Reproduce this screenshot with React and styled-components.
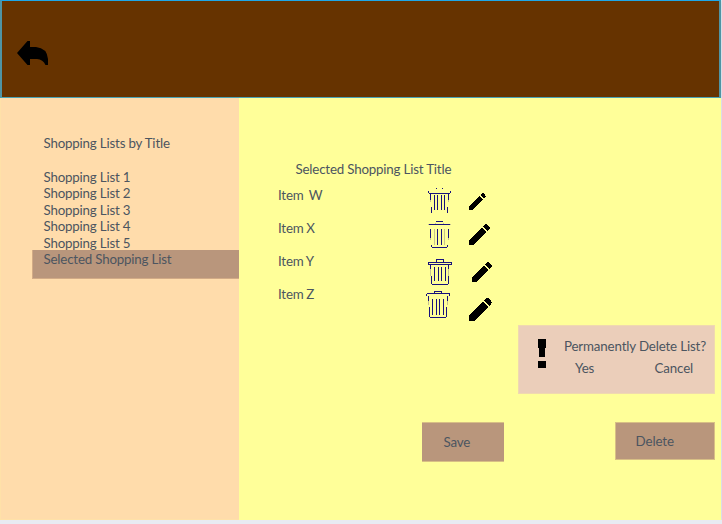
import React from "react";
import styled, { createGlobalStyle } from "styled-components";

const Global = createGlobalStyle`
  * { box-sizing: border-box; }
  body {
    margin: 0;
    background: #e8ebf2;
    font-family: Lato, "Liberation Sans", sans-serif;
    font-size: 13.33px;
    letter-spacing: -0.19px;
    line-height: 16.4px;
    color: #4c5560;
    overflow: hidden;
  }
`;

const Page = styled.div`
  width: 721px;
  height: 520px;
  display: grid;
  grid-template-rows: 98px 1fr;
  box-shadow: 0 1px 3px #c3c9d6;
`;

const Header = styled.header`
  background: #663300;
  border: 1px solid #1ea7e8;
  border-left: 2px solid #4f94a4;
  border-right: 2px solid #4f94a4;
  border-bottom-color: #4aa3b5;
  padding: 40px 0 0 15px;
  svg { display: block; }
`;

const Body = styled.div`
  display: grid;
  grid-template-columns: 239px 1fr;
`;

const Sidebar = styled.aside`
  background: #ffdcab;
  border-left: 1px solid #ffe1a8;
  border-bottom: 1px solid #ffe1a8;
  padding: 37px 0 0 31px;
`;

const SideTitle = styled.h2`
  margin: 0 0 17.3px 11.5px;
  font-size: inherit;
  font-weight: 400;
`;

const Lists = styled.ul`
  list-style: none;
  margin: 0;
  padding: 0;
`;

const ListEntry = styled.li`
  height: ${(p) => (p.$selected ? "29px" : "16.5px")};
  margin-top: ${(p) => (p.$selected ? "-1px" : "0")};
  padding-top: ${(p) => (p.$selected ? "0.6px" : "0")};
  padding-left: ${(p) => (p.$selected ? "10.5px" : "11.5px")};
  background: ${(p) => (p.$selected ? "#b9967c" : "transparent")};
  border: solid #d2ab86;
  border-width: ${(p) => (p.$selected ? "0 0 1px 1px" : "0")};
`;

const Main = styled.main`
  background: #ffff99;
  display: flex;
  flex-direction: column;
`;

const MainTitle = styled.h1`
  margin: 63px 0 0 56.5px;
  font-size: inherit;
  font-weight: 400;
  height: 26px;
`;

const Item = styled.div`
  display: flex;
  align-items: flex-start;
  height: 33px;
  padding-left: 39px;
`;

const ItemName = styled.span`
  width: 149px;
  white-space: pre;
  word-spacing: -0.5px;
`;

const Icon = styled.svg`
  flex: none;
  display: block;
  margin-top: ${(p) => p.$top || 0}px;
  margin-left: ${(p) => p.$left || 0}px;
`;

const Confirm = styled.section`
  align-self: flex-end;
  width: 197px;
  height: 69px;
  margin: 6px 6px 0 0;
  background: #ebceba;
  border: 1px solid #f0d9b0;
  display: flex;
  padding: 13px 0 0 19px;
`;

const Question = styled.div`
  margin: -1px 0 0 18px;
  letter-spacing: -0.16px;
  white-space: nowrap;
`;

const Answers = styled.div`
  display: flex;
  justify-content: space-between;
  width: 118px;
  margin: 6px 0 0 11px;
`;

const Choice = styled.button`
  font: inherit;
  letter-spacing: inherit;
  color: inherit;
  padding: 0;
  border: 0;
  background: none;
`;

const Actions = styled.div`
  display: flex;
  justify-content: space-between;
  align-items: flex-start;
  margin: 28px 6px 0 183px;
`;

const Action = styled.button`
  font: inherit;
  letter-spacing: ${(p) => (p.$sides ? "-0.1px" : "-0.17px")};
  color: inherit;
  text-align: left;
  width: ${(p) => p.$w}px;
  height: ${(p) => p.$h}px;
  padding: 0 0 0 ${(p) => p.$pad}px;
  background: #b9967c;
  border: solid #d8bf85;
  border-width: ${(p) => (p.$sides ? "1px" : "1px 0")};
`;

// Each bin is drawn on whole pixels, one stroke per outline segment.
const bins = [
  {
    top: 0,
    left: 0,
    dark: "M8 1.5h1M14 1.5h1M1 6.5h21M.5 4v2M22.5 4v2M2.5 7v6M20.5 7v6M6.5 8v15M9.5 8v15M13.5 8v15M16.5 8v15M3.5 20v6M19.5 20v6",
    faint: "M2.5 13v2M20.5 13v2",
  },
  {
    top: 0,
    left: 0,
    dark: "M8 1.5h7M1 4.5h21M2.5 9v9M20.5 9v9M9.5 9v16M13.5 9v16M4 27.5h15M3.5 25v2M19.5 25v2",
    faint: "M7 3.5h1M15 3.5h1M0 4.5h1M22 4.5h1M6.5 9v16M16.5 9v16M2.5 18v2M20.5 18v2",
  },
  {
    top: 5,
    left: 0,
    dark: "M8.5 4v-2.5h7v2.5M.5 4.5h23v2h-23zM2.5 7v4M20.5 7v4M3.5 18v8M20.5 18v8M4 26.5h16M6.5 9v14M10.5 9v14M13.5 9v14M17.5 9v14",
    faint: "M2.5 11v7M20.5 11v7",
  },
  {
    top: 4,
    left: -1,
    dark: "M7.5 3v-1.5h7v1.5M0 3.5h23M-.5 4v2M22.5 4v2M1.5 6v5M20.5 6v5M2.5 17v10M19.5 17v10M3 27.5h16M5.5 9v16M9.5 9v16M12.5 9v16M16.5 9v16",
    faint: "M1.5 11v4M20.5 11v4",
  },
];

const pencils = [
  { top: 6, left: 15, size: 17 },
  { top: 4, left: 15, size: 21 },
  { top: 9, left: 18, size: 20 },
  { top: 12, left: 16, size: 23 },
];

function Bin({ kind }) {
  const b = bins[kind];
  return (
    <Icon $top={b.top} $left={b.left} width="27" height="30" viewBox="-1 0 27 30" fill="none" shapeRendering="crispEdges">
      <path d={b.faint} stroke="#c5c291" />
      <path d={b.dark} stroke="#18127c" />
    </Icon>
  );
}

function Pencil({ kind }) {
  const p = pencils[kind];
  return (
    <Icon $top={p.top} $left={p.left} width={p.size} height={p.size} viewBox="0 0 24 24" shapeRendering="crispEdges">
      <path d="M0 24V18.5L14.5 4L20 9.5L5.5 24ZM15.8 2.7L18 .5Q20-.8 22 1.5L23 3Q24.4 5 23 6.3L21.2 8.1Z" />
    </Icon>
  );
}

const lists = ["Shopping List 1", "Shopping List 2", "Shopping List 3", "Shopping List 4", "Shopping List 5"];
const items = ["Item  W", "Item X", "Item Y", "Item Z"];

export default function App() {
  return (
    <>
      <Global />
      <Page>
        <Header>
          <svg width="32" height="25" viewBox="0 0 32 25">
            <path d="M0 12L10.5 0H13V6H19Q30 7 31 18V24H28.5Q26 18.5 20 18H13V24H10.5Z" />
          </svg>
        </Header>
        <Body>
          <Sidebar>
            <SideTitle>Shopping Lists by Title</SideTitle>
            <Lists>
              {lists.map((name) => (
                <ListEntry key={name}>{name}</ListEntry>
              ))}
              <ListEntry $selected>Selected Shopping List</ListEntry>
            </Lists>
          </Sidebar>
          <Main>
            <MainTitle>Selected Shopping List Title</MainTitle>
            {items.map((name, i) => (
              <Item key={name}>
                <ItemName>{name}</ItemName>
                <Bin kind={i} />
                <Pencil kind={i} />
              </Item>
            ))}
            <Confirm>
              <svg width="8" height="30" viewBox="0 0 8 30" shapeRendering="crispEdges">
                <path d="M0 0H8V9H7V18H1V9H0ZM0 22H8V29H0Z" />
              </svg>
              <Question>
                Permanently Delete List?
                <Answers>
                  <Choice>Yes</Choice>
                  <Choice>Cancel</Choice>
                </Answers>
              </Question>
            </Confirm>
            <Actions>
              <Action $w={82} $h={40} $pad={21.5}>
                Save
              </Action>
              <Action $w={100} $h={38} $pad={19.5} $sides>
                Delete
              </Action>
            </Actions>
          </Main>
        </Body>
      </Page>
    </>
  );
}
